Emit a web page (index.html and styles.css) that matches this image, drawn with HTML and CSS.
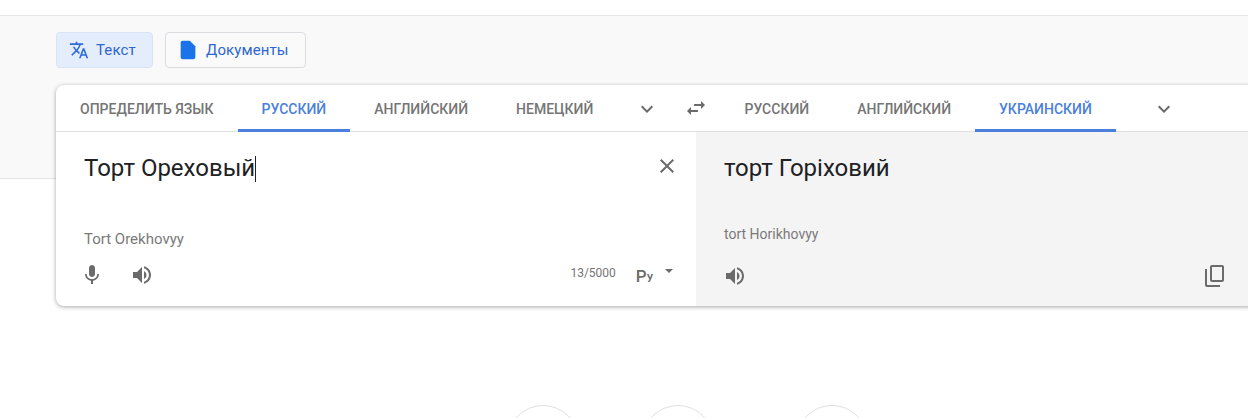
FILE: index.html
```html
<!DOCTYPE html>
<html lang="ru">
<head>
<meta charset="utf-8">
<title>Переводчик</title>
<link rel="stylesheet" href="styles.css">
</head>
<body>
<header class="topbar"></header>
<section class="band">
  <nav class="modes">
    <button class="mode mode-active">
      <svg class="mode-icon-translate" viewBox="0 0 24 24"><path d="M12.87 15.07l-2.54-2.51.03-.03c1.74-1.94 2.98-4.17 3.71-6.53H17V4h-7V2H8v2H1v1.99h11.17C11.5 7.92 10.44 9.75 9 11.35 8.07 10.32 7.3 9.19 6.69 8h-2c.73 1.63 1.73 3.17 2.98 4.56l-5.09 5.02L4 19l5-5 3.11 3.11.76-2.04zM18.5 10h-2L12 22h2l1.12-3h4.75L21 22h2l-4.5-12zm-2.62 7l1.62-4.33L19.12 17h-3.24z"/></svg>
      <span>Текст</span>
    </button>
    <button class="mode mode-docs">
      <svg class="mode-icon-doc" viewBox="0 0 24 24"><path d="M14 2H6c-1.1 0-2 .9-2 2v16c0 1.1.9 2 2 2h12c1.1 0 2-.9 2-2V8l-6-6z"/></svg>
      <span>Документы</span>
    </button>
  </nav>
  <div class="card">
    <div class="langbar">
      <div class="langs langs-source">
        <span class="lang">ОПРЕДЕЛИТЬ ЯЗЫК</span>
        <span class="lang lang-active">РУССКИЙ</span>
        <span class="lang">АНГЛИЙСКИЙ</span>
        <span class="lang">НЕМЕЦКИЙ</span>
        <svg class="icon chev chev-source" viewBox="0 0 24 24"><path d="M16.59 8.59L12 13.17 7.41 8.59 6 10l6 6 6-6z"/></svg>
      </div>
      <svg class="icon swap" viewBox="0 0 24 24"><path d="M6.99 11L3 15l3.99 4v-3H14v-2H6.99v-3zM21 9l-4-4v3h-7v2h7v3l4-4z"/></svg>
      <div class="langs langs-target">
        <span class="lang">РУССКИЙ</span>
        <span class="lang">АНГЛИЙСКИЙ</span>
        <span class="lang lang-active">УКРАИНСКИЙ</span>
        <svg class="icon chev chev-target" viewBox="0 0 24 24"><path d="M16.59 8.59L12 13.17 7.41 8.59 6 10l6 6 6-6z"/></svg>
      </div>
    </div>
    <div class="panes">
      <div class="pane pane-source">
        <div class="source-row">
          <div class="big-text">Торт Ореховый<span class="caret"></span></div>
          <svg class="icon clear" viewBox="0 0 24 24"><path d="M19 6.41L17.59 5 12 10.59 6.41 5 5 6.41 10.59 12 5 17.59 6.41 19 12 13.41 17.59 19 19 17.59 13.41 12z"/></svg>
        </div>
        <div class="translit">Tort Orekhovyy</div>
        <div class="tools">
          <svg class="icon" viewBox="0 0 24 24"><path d="M12 14c1.66 0 2.99-1.34 2.99-3L15 5c0-1.66-1.34-3-3-3S9 3.34 9 5v6c0 1.66 1.34 3 3 3zm5.3-3c0 3-2.54 5.1-5.3 5.1S6.7 14 6.7 11H5c0 3.41 2.72 6.23 6 6.72V21h2v-3.28c3.28-.48 6-3.3 6-6.72h-1.7z"/></svg>
          <svg class="icon" viewBox="0 0 24 24"><path d="M3 9v6h4l5 5V4L7 9H3zm13.5 3c0-1.77-1.02-3.29-2.5-4.03v8.05c1.48-.73 2.5-2.25 2.5-4.02zM14 3.23v2.06c2.89.86 5 3.54 5 6.71s-2.11 5.85-5 6.71v2.06c4.01-.91 7-4.49 7-8.77s-2.99-7.86-7-8.77z"/></svg>
          <span class="counter">13/5000</span>
          <span class="ime"><span class="ime-big">Р</span><span class="ime-small">У</span></span>
          <span class="ime-caret"></span>
        </div>
      </div>
      <div class="pane pane-target">
        <div class="big-text target-text">торт Горіховий</div>
        <div class="translit translit-target">tort Horikhovyy</div>
        <div class="tools tools-target">
          <svg class="icon" viewBox="0 0 24 24"><path d="M3 9v6h4l5 5V4L7 9H3zm13.5 3c0-1.77-1.02-3.29-2.5-4.03v8.05c1.48-.73 2.5-2.25 2.5-4.02zM14 3.23v2.06c2.89.86 5 3.54 5 6.71s-2.11 5.85-5 6.71v2.06c4.01-.91 7-4.49 7-8.77s-2.99-7.86-7-8.77z"/></svg>
          <svg class="icon" viewBox="0 0 24 24"><path d="M4 5H2v16c0 1.1.9 2 2 2h13v-2H4V5zM19 1H9c-1.1 0-2 .9-2 2v13c0 1.1.9 2 2 2h10c1.1 0 2-.9 2-2V3c0-1.1-.9-2-2-2zm0 15H9V3h10v13z"/></svg>
        </div>
      </div>
    </div>
  </div>
</section>
<section class="circles">
  <div class="circle"></div>
  <div class="circle"></div>
  <div class="circle circle-last"></div>
</section>
</body>
</html>
```
FILE: styles.css
```css
html, body {
  margin: 0;
  height: 418px;
  overflow: hidden;
  background: #fff;
  font-family: Roboto, "Liberation Sans", sans-serif;
}

.topbar {
  height: 15px;
  border-bottom: 1px solid #e4e4e4;
}

.band {
  height: 146px;
  background: #f9f9fa;
  border-bottom: 1px solid #e4e4e4;
  padding: 16px 0 0 56px;
}

.modes {
  display: flex;
  gap: 12px;
  height: 36px;
}

.mode {
  display: flex;
  align-items: center;
  height: 36px;
  box-sizing: border-box;
  padding: 0;
  border-radius: 4px;
  font: 400 15px Roboto, sans-serif;
  letter-spacing: 0.1px;
  color: #2f66d0;
  background: #fff;
  border: 1px solid #dadce0;
}

.mode-active {
  width: 97px;
  background: #e4edfb;
  border-color: #d8e4f6;
  padding-left: 12px;
  gap: 7px;
}

.mode-docs {
  width: 141px;
  background: #fafafb;
  padding-left: 11px;
  gap: 7px;
}

.mode-icon-translate {
  width: 20px;
  height: 20px;
  fill: #2f6ad9;
}

.mode-icon-doc {
  width: 22px;
  height: 22px;
  fill: #1a73e8;
}

.card {
  margin-top: 17px;
  width: 1200px;
  height: 221px;
  background: #fff;
  border-radius: 8px;
  box-shadow: 0 1px 4px rgba(0, 0, 0, 0.35);
  overflow: hidden;
  display: flex;
  flex-direction: column;
}

.langbar {
  display: flex;
  align-items: stretch;
  height: 46px;
  border-bottom: 1px solid #e0e0e0;
}

.langs {
  display: flex;
  align-items: stretch;
}

.langs-source { width: 616px; }

.lang {
  display: flex;
  align-items: center;
  padding: 3px 24px 0;
  font-size: 14px;
  font-weight: 500;
  color: #757575;
  border-bottom: 3px solid transparent;
  margin-bottom: -1px;
  white-space: nowrap;
}

.lang-active {
  color: #4a80dc;
  border-bottom-color: #4a80dc;
}

.icon {
  width: 24px;
  height: 24px;
  fill: #6b6b6b;
  flex: none;
}

.chev {
  align-self: center;
  margin-top: 2px;
}

.chev-source { margin-left: 18px; }
.chev-target { margin-left: 36px; }

.swap {
  align-self: center;
  margin-left: 12px;
}

.langs-target { margin-left: 12.5px; }

.panes {
  display: flex;
  flex: 1;
}

.pane {
  display: flex;
  flex-direction: column;
}

.pane-source {
  width: 640px;
  box-sizing: border-box;
  padding: 20px 17px 0 28px;
}

.pane-target {
  flex: 1;
  background: #f4f4f4;
  padding: 20px 29px 0 28px;
}

.source-row {
  display: flex;
  justify-content: space-between;
  height: 77px;
}

.big-text {
  font-size: 24px;
  line-height: 32px;
  color: #202124;
  height: 32px;
}

.caret {
  display: inline-block;
  width: 1px;
  height: 26px;
  background: #202124;
  vertical-align: -6px;
}

.clear { margin-top: 2px; }

.translit {
  font-size: 15px;
  line-height: 20px;
  color: #7a7a7a;
}

.target-text { margin-bottom: 40px; }

.translit-target { font-size: 14px; }

.tools {
  display: flex;
  align-items: center;
  height: 36px;
  margin-top: 8px;
  margin-left: -4px;
  gap: 26px;
}

.tools-target {
  margin-top: 14px;
  margin-left: -1px;
  justify-content: space-between;
}

.counter {
  margin-left: auto;
  margin-top: -4px;
  margin-right: -6px;
  font-size: 12px;
  color: #757575;
}

.ime {
  display: flex;
  align-items: baseline;
  margin-top: 2px;
  color: #6b6b6b;
  font-weight: 500;
  line-height: 1;
}

.ime-big { font-size: 17px; }
.ime-small { font-size: 10px; font-weight: 700; }

.ime-caret {
  width: 0;
  height: 0;
  margin-left: -14px;
  margin-right: 6px;
  margin-top: -8px;
  border-left: 4px solid transparent;
  border-right: 4px solid transparent;
  border-top: 4px solid #6b6b6b;
}

.circles {
  display: flex;
  gap: 63px;
  height: 13px;
  overflow: hidden;
  margin-top: 226px;
  padding-left: 507px;
}

.circle {
  flex: none;
  width: 72px;
  height: 72px;
  box-sizing: border-box;
  border: 1px solid #e0e0e0;
  border-radius: 50%;
}

.circle-last { margin-left: 19px; }
```
